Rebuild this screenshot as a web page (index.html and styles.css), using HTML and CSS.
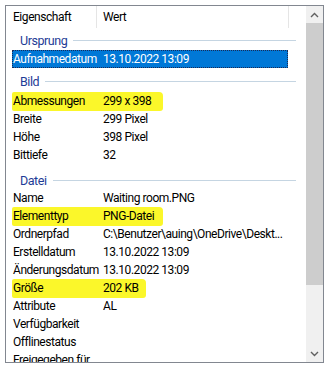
FILE: index.html
```html
<!DOCTYPE html>
<html lang="de">
<head>
    <meta charset="UTF-8">
    <title>Eigenschaften</title>
    <link rel="stylesheet" href="styles.css">
</head>
<body>
    <div class="props-box">
        <div class="props-list">
            <div class="list-header">
                <div class="col-head col-name">Eigenschaft</div>
                <div class="col-head col-value">Wert</div>
            </div>

            <div class="group group-first"><span class="group-title">Ursprung</span><span class="group-line"></span></div>
            <div class="row selected"><span>Aufnahmedatum</span><span>13.10.2022 13:09</span></div>

            <div class="group group-mid"><span class="group-title">Bild</span><span class="group-line"></span></div>
            <div class="row marked"><span>Abmessungen</span><span>299 x 398</span></div>
            <div class="row"><span>Breite</span><span>299 Pixel</span></div>
            <div class="row"><span>Höhe</span><span>398 Pixel</span></div>
            <div class="row"><span>Bittiefe</span><span>32</span></div>

            <div class="group"><span class="group-title">Datei</span><span class="group-line"></span></div>
            <div class="row"><span>Name</span><span>Waiting room.PNG</span></div>
            <div class="row marked"><span>Elementtyp</span><span>PNG-Datei</span></div>
            <div class="row"><span>Ordnerpfad</span><span>C:\Benutzer\auing\OneDrive\Deskt...</span></div>
            <div class="row"><span>Erstelldatum</span><span>13.10.2022 13:09</span></div>
            <div class="row"><span>Änderungsdatum</span><span>13.10.2022 13:09</span></div>
            <div class="row marked marked-short"><span>Größe</span><span>202 KB</span></div>
            <div class="row"><span>Attribute</span><span>AL</span></div>
            <div class="row"><span>Verfügbarkeit</span><span></span></div>
            <div class="row"><span>Offlinestatus</span><span></span></div>
            <div class="row row-last"><span>Freigegeben für</span><span></span></div>
        </div>

        <div class="scrollbar">
            <div class="scroll-btn">
                <svg width="9" height="6" viewBox="0 0 9 6"><path d="M1 5 L4.5 1.5 L8 5" fill="none" stroke="#606060" stroke-width="1.4"/></svg>
            </div>
            <div class="scroll-track">
                <div class="scroll-thumb"></div>
            </div>
            <div class="scroll-btn">
                <svg width="9" height="6" viewBox="0 0 9 6"><path d="M1 1 L4.5 4.5 L8 1" fill="none" stroke="#606060" stroke-width="1.4"/></svg>
            </div>
        </div>
    </div>
</body>
</html>
```

FILE: styles.css
```css
* {
    margin: 0;
    padding: 0;
    box-sizing: border-box;
}

body {
    font-family: Roboto, 'Liberation Sans', Arial, sans-serif;
    font-size: 12px;
    letter-spacing: -0.45px;
    color: #000;
    background: #fff;
    width: 331px;
    height: 369px;
    overflow: hidden;
}

.props-box {
    margin: 5px 0 0 5px;
    width: 319px;
    height: 358px;
    border: 1px solid #828790;
    display: flex;
    overflow: hidden;
}

.props-list {
    flex: 1;
    overflow: hidden;
}

/* Spaltenkopf */
.list-header {
    display: flex;
    height: 22px;
    align-items: center;
}

.col-head {
    height: 100%;
    display: flex;
    align-items: center;
    border-right: 1px solid #e5e5e5;
}

.col-name {
    width: 91px;
    padding-left: 7px;
}

.col-value {
    width: 192px;
    padding-left: 6px;
}

/* Gruppenüberschriften */
.group {
    display: flex;
    align-items: center;
    height: 25px;
    padding: 7px 0 0 14px;
    width: 290px;
}

.group-first {
    height: 22px;
    padding-top: 2px;
}

.group-mid {
    height: 24px;
    padding-top: 2px;
}

.group-title {
    color: #1e3c96;
    font-size: 12.5px;
}

.group-line {
    flex: 1;
    height: 1px;
    background: #c5d5e2;
    margin-left: 6px;
}

/* Zeilen */
.row {
    position: relative;
    display: grid;
    grid-template-columns: 90px 1fr;
    height: 18px;
    align-items: center;
    margin-left: 6px;
    width: 276px;
    padding-left: 1px;
    white-space: nowrap;
}

.row span {
    position: relative;
}

.row.selected {
    background: #0078d7;
    color: #fff;
    outline: 1px dotted #1b2a55;
    outline-offset: -1px;
}

/* unterste Zeile wird vom Rahmen abgeschnitten */
.row-last {
    align-items: start;
    padding-top: 2px;
}

/* Textmarker */
.row.marked::before {
    content: '';
    position: absolute;
    left: 0;
    top: 0;
    width: 151px;
    height: 19px;
    background: #fbf72a;
    border-radius: 2px 4px 3px 2px;
}

.row.marked-short::before {
    width: 134px;
}

/* Scrollleiste */
.scrollbar {
    width: 17px;
    display: flex;
    flex-direction: column;
    background: #f0f0f0;
}

.scroll-btn {
    height: 17px;
    display: flex;
    align-items: center;
    justify-content: center;
}

.scroll-track {
    flex: 1;
}

.scroll-thumb {
    height: 262px;
    background: #cdcdcd;
}
```
